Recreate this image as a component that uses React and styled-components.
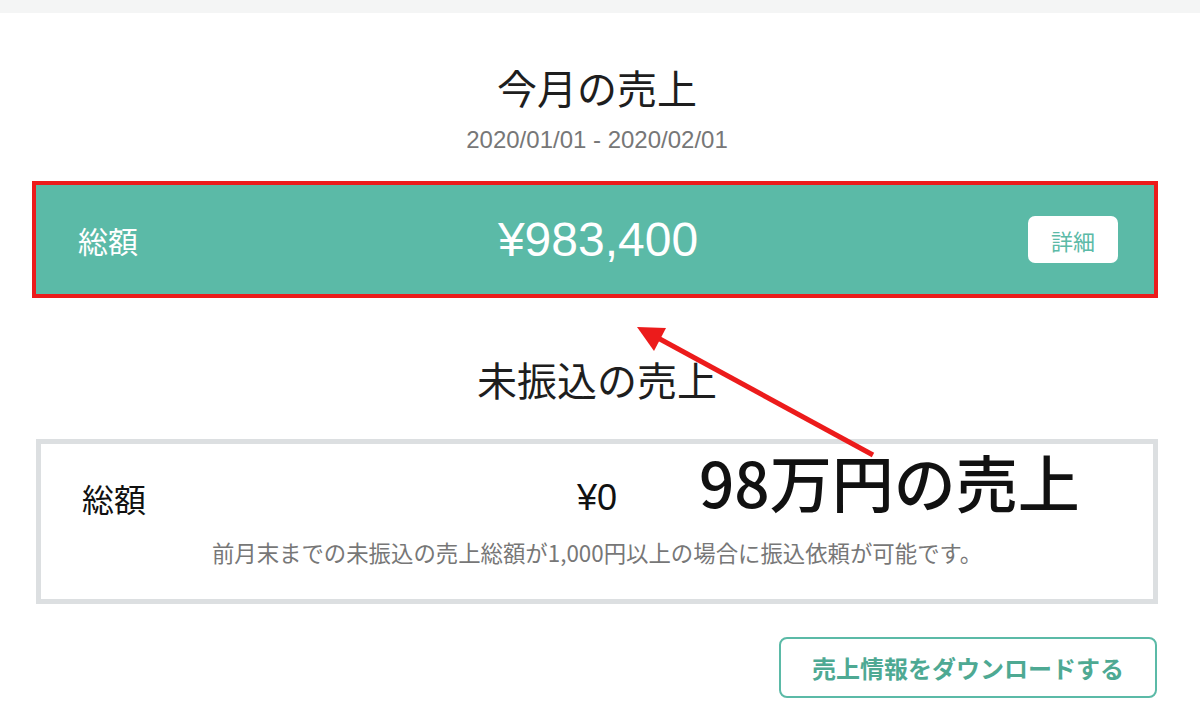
import styled, { createGlobalStyle } from "styled-components";

const GlobalStyle = createGlobalStyle`
  html, body {
    margin: 0;
    padding: 0;
    background: #ffffff;
    font-family: "Liberation Sans", "Noto Sans CJK JP", sans-serif;
  }
`;

const TopBar = styled.div`
  height: 13px;
  background: #f4f5f5;
`;

const Page = styled.main`
  position: relative;
  display: flex;
  flex-direction: column;
  padding: 50px 42px 0 36px;
`;

const Title = styled.h1`
  margin: 0;
  text-align: center;
  font-family: "Noto Sans CJK JP", sans-serif;
  font-weight: 400;
  font-size: 40px;
  line-height: 48px;
  color: #1e1e1e;
  margin-top: ${(p) => p.$top || 0}px;
`;

const Period = styled.div`
  margin-top: 15px;
  text-align: center;
  font-size: 24px;
  line-height: 28px;
  color: #777777;
`;

const Row = styled.div`
  display: grid;
  grid-template-columns: 1fr auto 1fr;
  align-items: center;
`;

const TotalBox = styled(Row)`
  margin: 27px 0 0 -4px;
  height: 109px;
  padding: 0 36px 0 42px;
  background: #5bbaa7;
  border: 4px solid #ec1b1b;
  color: #ffffff;
`;

const Label = styled.span`
  font-family: "Noto Sans CJK JP", sans-serif;
  font-size: ${(p) => p.$size}px;
  color: ${(p) => p.$color};
`;

const Amount = styled.span`
  font-size: ${(p) => p.$size}px;
  color: ${(p) => p.$color};
  line-height: 1;
`;

const DetailButton = styled.button`
  justify-self: end;
  width: 90px;
  height: 47px;
  border: none;
  border-radius: 7px;
  background: #ffffff;
  color: #5bbaa7;
  font-family: "Noto Sans CJK JP", sans-serif;
  font-size: 22px;
  cursor: pointer;
`;

const PendingBox = styled.section`
  margin-top: 36px;
  border: 5px solid #dcdfe1;
  padding: 31px 41px 32px;
`;

const PendingRow = styled(Row)`
  height: 40px;
`;

const Note = styled.p`
  margin: 22px 0 0;
  text-align: center;
  font-family: "Noto Sans CJK JP", sans-serif;
  font-size: 22.4px;
  line-height: 30px;
  color: #777777;
`;

const Actions = styled.div`
  display: flex;
  justify-content: flex-end;
  margin-top: 33px;
`;

const DownloadButton = styled.button`
  width: 378px;
  height: 61px;
  margin-right: 1px;
  border: 2px solid #5bbaa7;
  border-radius: 8px;
  background: #ffffff;
  color: #4ea993;
  font-family: "Noto Sans CJK JP", sans-serif;
  font-weight: 700;
  font-size: 24px;
  cursor: pointer;
`;

const Callout = styled.div`
  position: absolute;
  left: 699px;
  top: 437px;
  font-family: "Noto Sans CJK JP", sans-serif;
  font-weight: 500;
  font-size: 62px;
  line-height: 1;
  color: #111111;
  white-space: nowrap;
`;

const ArrowSvg = styled.svg`
  position: absolute;
  left: 620px;
  top: 300px;
  width: 270px;
  height: 160px;
  overflow: visible;
`;

const Arrow = () => (
  <ArrowSvg viewBox="0 0 270 160">
    <line x1="253" y1="142" x2="38" y2="25" stroke="#ec1b1b" strokeWidth="5" />
    <polygon points="17,14 46,15 34,38" fill="#ec1b1b" />
  </ArrowSvg>
);

export default function App() {
  return (
    <>
      <GlobalStyle />
      <TopBar />
      <Page>
        <Title>今月の売上</Title>
        <Period>2020/01/01 - 2020/02/01</Period>
        <TotalBox>
          <Label $size={30} $color="#ffffff">総額</Label>
          <Amount $size={48} $color="#ffffff">¥983,400</Amount>
          <DetailButton>詳細</DetailButton>
        </TotalBox>

        <Title $top={57}>未振込の売上</Title>
        <PendingBox>
          <PendingRow>
            <Label $size={32} $color="#111111">総額</Label>
            <Amount $size={36} $color="#111111">¥0</Amount>
            <span />
          </PendingRow>
          <Note>前月末までの未振込の売上総額が1,000円以上の場合に振込依頼が可能です。</Note>
        </PendingBox>

        <Actions>
          <DownloadButton>売上情報をダウンロードする</DownloadButton>
        </Actions>

        <Arrow />
        <Callout>98万円の売上</Callout>
      </Page>
    </>
  );
}
